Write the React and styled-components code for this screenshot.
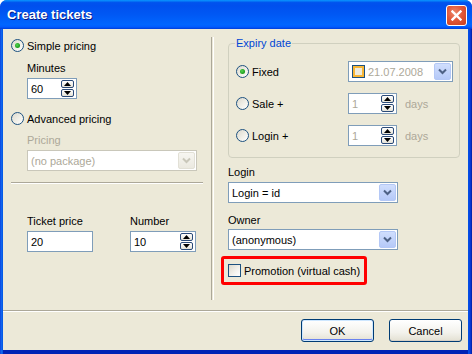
import React from "react";
import styled, { createGlobalStyle } from "styled-components";

const GlobalStyle = createGlobalStyle`
  html, body {
    margin: 0;
    padding: 0;
    background: #ffffff;
  }
  body {
    font-family: "Liberation Sans", Arial, sans-serif;
    font-size: 11px;
    color: #000;
  }
`;

function Chevron({ color }) {
  return (
    <svg width="9" height="7" viewBox="0 0 9 7">
      <path d="M1 1.5 L4.5 5 L8 1.5" fill="none" stroke={color} strokeWidth="2" />
    </svg>
  );
}

function Arrow({ up }) {
  return (
    <svg width="7" height="4" viewBox="0 0 7 4">
      <path d={up ? "M0 4 L3.5 0 L7 4 Z" : "M0 0 L3.5 4 L7 0 Z"} fill="#000" />
    </svg>
  );
}

function Spin({ value, width, disabled }) {
  return (
    <SpinBox $width={width}>
      <FieldText $disabled={disabled}>{value}</FieldText>
      <SpinButtons>
        <SpinBtn>
          <Arrow up />
        </SpinBtn>
        <SpinBtn>
          <Arrow />
        </SpinBtn>
      </SpinButtons>
    </SpinBox>
  );
}

function Select({ value, width, disabled }) {
  return (
    <SelectBox $width={width} $disabled={disabled}>
      <FieldText $disabled={disabled}>{value}</FieldText>
      <DropBtn $disabled={disabled}>
        <Chevron color={disabled ? "#c9c7ba" : "#4d6185"} />
      </DropBtn>
    </SelectBox>
  );
}

function Radio({ checked, children }) {
  return (
    <RadioRow>
      <RadioCircle>{checked && <RadioDot />}</RadioCircle>
      <span>{children}</span>
    </RadioRow>
  );
}

export default function App() {
  return (
    <>
      <GlobalStyle />
      <Window>
        <TitleBar>
          <span>Create tickets</span>
          <CloseButton>
            <svg width="11" height="11" viewBox="0 0 11 11">
              <path d="M1.5 1.5 L9.5 9.5 M9.5 1.5 L1.5 9.5" stroke="#fff" strokeWidth="2.4" strokeLinecap="square" />
            </svg>
          </CloseButton>
        </TitleBar>
        <Client>
          <Main>
            <LeftPane>
              <Radio checked>Simple pricing</Radio>
              <Indent>
                <Label $top={10}>Minutes</Label>
                <FieldGap>
                  <Spin value="60" width={50} />
                </FieldGap>
              </Indent>
              <Gap $h={13} />
              <Radio>Advanced pricing</Radio>
              <Indent>
                <Label $top={9} $disabled>
                  Pricing
                </Label>
                <FieldGap>
                  <Select value="(no package)" width={170} disabled />
                </FieldGap>
              </Indent>
              <HSep />
              <Indent>
                <PriceRow>
                  <div>
                    <Label>Ticket price</Label>
                    <FieldGap>
                      <TextBox $width={66}>
                        <FieldText>20</FieldText>
                      </TextBox>
                    </FieldGap>
                  </div>
                  <div>
                    <Label>Number</Label>
                    <FieldGap>
                      <Spin value="10" width={66} />
                    </FieldGap>
                  </div>
                </PriceRow>
              </Indent>
            </LeftPane>
            <VSep />
            <RightPane>
              <Group>
                <Legend>Expiry date</Legend>
                <GroupRow $top={1}>
                  <RadioCol>
                    <Radio checked>Fixed</Radio>
                  </RadioCol>
                  <DateBox>
                    <DateCheck />
                    <FieldText $disabled>21.07.2008</FieldText>
                    <DropBtn>
                      <Chevron color="#4d6185" />
                    </DropBtn>
                  </DateBox>
                </GroupRow>
                <GroupRow $top={11}>
                  <RadioCol>
                    <Radio>Sale +</Radio>
                  </RadioCol>
                  <Spin value="1" width={49} disabled />
                  <Days>days</Days>
                </GroupRow>
                <GroupRow $top={11}>
                  <RadioCol>
                    <Radio>Login +</Radio>
                  </RadioCol>
                  <Spin value="1" width={49} disabled />
                  <Days>days</Days>
                </GroupRow>
              </Group>
              <Label $top={8}>Login</Label>
              <FieldGap $top={3}>
                <Select value="Login = id" width={170} />
              </FieldGap>
              <Label $top={11}>Owner</Label>
              <FieldGap $top={2}>
                <Select value="(anonymous)" width={170} />
              </FieldGap>
              <Highlight>
                <CheckBox />
                <span>Promotion (virtual cash)</span>
              </Highlight>
            </RightPane>
          </Main>
          <BottomSep />
          <ButtonRow>
            <Button $default>OK</Button>
            <Button>Cancel</Button>
          </ButtonRow>
        </Client>
      </Window>
    </>
  );
}

const Window = styled.div`
  width: 472px;
  height: 354px;
  display: flex;
  flex-direction: column;
  background: linear-gradient(to right, #0831d9 0, #166aee 1px, #0055e5 3px, #0055e5 468px, #0a3ee0 470px, #001ea0 472px);
  border-radius: 7px 7px 0 0;
  overflow: hidden;
`;

const TitleBar = styled.div`
  height: 29px;
  flex: none;
  display: flex;
  align-items: center;
  justify-content: space-between;
  padding: 0 5px 0 7px;
  box-sizing: border-box;
  background: linear-gradient(
    to bottom,
    #0997ff 0%,
    #0053ee 9%,
    #0050ee 20%,
    #0058f4 50%,
    #0066ff 85%,
    #005bff 93%,
    #003dd7 100%
  );
  color: #fff;
  font-family: "Liberation Sans", Arial, sans-serif;
  font-weight: bold;
  font-size: 13px;
  text-shadow: 1px 1px 0 #0a1883;
`;

const CloseButton = styled.div`
  width: 19px;
  height: 19px;
  margin-top: 1px;
  border: 1px solid #fff;
  border-radius: 3px;
  display: flex;
  align-items: center;
  justify-content: center;
  background: radial-gradient(circle at 40% 35%, #ec8a6c 0%, #e1583a 45%, #c83d1c 100%);
`;

const Client = styled.div`
  flex: 1;
  display: flex;
  flex-direction: column;
  margin: 0 4px 4px 3px;
  background: #ece9d8;
  box-shadow: 0 4px 0 #0023b5;
`;

const Main = styled.div`
  height: 281px;
  display: flex;
`;

const LeftPane = styled.div`
  width: 200px;
  padding: 10px 0 0 8px;
`;

const RightPane = styled.div`
  flex: 1;
  padding: 8px 0 0 14px;
`;

const VSep = styled.div`
  width: 1px;
  margin: 8px 0 10px;
  border-left: 1px solid #aca899;
  border-right: 1px solid #fff;
`;

const RadioRow = styled.div`
  display: flex;
  align-items: center;
  gap: 3px;
  height: 13px;
  white-space: nowrap;
`;

const RadioCircle = styled.div`
  width: 11px;
  height: 11px;
  border: 1px solid #1c5180;
  border-radius: 50%;
  background: linear-gradient(135deg, #dcd9cd 0%, #f2f1ea 60%, #ffffff 100%);
  display: flex;
  align-items: center;
  justify-content: center;
  flex: none;
`;

const RadioDot = styled.div`
  width: 5px;
  height: 5px;
  border-radius: 50%;
  background: radial-gradient(circle at 40% 40%, #55d551 0%, #21a121 60%, #1a8a1a 100%);
`;

const Indent = styled.div`
  margin-left: 16px;
`;

const Gap = styled.div`
  height: ${(p) => p.$h}px;
`;

const Label = styled.div`
  margin-top: ${(p) => p.$top || 0}px;
  height: 13px;
  line-height: 13px;
  color: ${(p) => (p.$disabled ? "#aca899" : "#000")};
  white-space: nowrap;
`;

const FieldGap = styled.div`
  margin-top: ${(p) => p.$top ?? 3}px;
`;

const Field = styled.div`
  box-sizing: border-box;
  width: ${(p) => p.$width}px;
  height: 21px;
  border: 1px solid ${(p) => (p.$disabled ? "#c9c7ba" : "#7f9db9")};
  background: #fff;
  display: flex;
  align-items: center;
`;

const TextBox = styled(Field)``;

const FieldText = styled.span`
  flex: 1;
  padding-left: 3px;
  color: ${(p) => (p.$disabled ? "#aca899" : "#000")};
  white-space: nowrap;
  overflow: hidden;
`;

const SpinBox = styled(Field)`
  padding-right: 2px;
`;

const SpinButtons = styled.div`
  display: flex;
  flex-direction: column;
  gap: 1px;
`;

const SpinBtn = styled.div`
  box-sizing: border-box;
  width: 13px;
  height: 8px;
  border: 1px solid #2a4a78;
  border-radius: 2px;
  background: linear-gradient(#ffffff, #e5e3d8);
  display: flex;
  align-items: center;
  justify-content: center;
`;

const SelectBox = styled(Field)`
  padding-right: 1px;
`;

const DropBtn = styled.div`
  box-sizing: border-box;
  width: 17px;
  height: 17px;
  border: 1px solid ${(p) => (p.$disabled ? "#e2e0d6" : "#b4c8f6")};
  border-radius: 2px;
  background: ${(p) =>
    p.$disabled
      ? "linear-gradient(#f7f6f1, #ebe9e0)"
      : "linear-gradient(#d0defd, #b5c9f8)"};
  display: flex;
  align-items: center;
  justify-content: center;
`;

const HSep = styled.div`
  width: 192px;
  height: 0;
  margin-top: 11px;
  border-top: 1px solid #aca899;
  border-bottom: 1px solid #fff;
`;

const PriceRow = styled.div`
  display: flex;
  gap: 37px;
  margin-top: 31px;
`;

const Group = styled.fieldset`
  box-sizing: border-box;
  width: 232px;
  height: 121px;
  margin: 0;
  padding: 10px 0 0 7px;
  border: 1px solid #d0d0bf;
  border-radius: 4px;
`;

const Legend = styled.legend`
  padding: 0 1px;
  margin-left: -1px;
  color: #0046d5;
  line-height: 13px;
`;

const GroupRow = styled.div`
  display: flex;
  align-items: center;
  height: 21px;
  margin-top: ${(p) => p.$top || 0}px;
`;

const RadioCol = styled.div`
  width: 112px;
`;

const DateBox = styled(Field)`
  width: 105px;
  padding: 0 1px 0 3px;
`;

const DateCheck = styled.div`
  box-sizing: border-box;
  width: 13px;
  height: 13px;
  border: 1px solid #1c5180;
  box-shadow: inset 0 0 0 2px #f8b636;
  background: #eeeadb;
  flex: none;
`;

const Days = styled.span`
  margin-left: 8px;
  color: #aca899;
`;

const Highlight = styled.div`
  box-sizing: border-box;
  width: 146px;
  height: 29px;
  margin: 6px 0 0 -7px;
  padding-left: 4px;
  border: 3px solid #ff0000;
  border-radius: 3px;
  display: flex;
  align-items: center;
  gap: 3px;
  white-space: nowrap;
`;

const CheckBox = styled.div`
  box-sizing: border-box;
  width: 13px;
  height: 13px;
  border: 1px solid #1c5180;
  background: linear-gradient(135deg, #dcd9cd 0%, #f4f3ee 60%, #ffffff 100%);
  flex: none;
`;

const BottomSep = styled.div`
  height: 0;
  border-top: 1px solid #aca899;
  border-bottom: 1px solid #fff;
`;

const ButtonRow = styled.div`
  display: flex;
  justify-content: flex-end;
  gap: 15px;
  padding: 7px 6px 0 0;
`;

const Button = styled.div`
  box-sizing: border-box;
  width: 73px;
  height: 23px;
  border: 1px solid #003c74;
  border-radius: 3px;
  background: linear-gradient(#ffffff 0%, #f3f2ec 60%, #e3e0d2 100%);
  box-shadow: ${(p) =>
    p.$default ? "inset 0 0 0 1px #cee7ff, inset 0 -1px 0 1px #6982ee" : "inset 0 -1px 0 #d6d0c5"};
  display: flex;
  align-items: center;
  justify-content: center;
`;
